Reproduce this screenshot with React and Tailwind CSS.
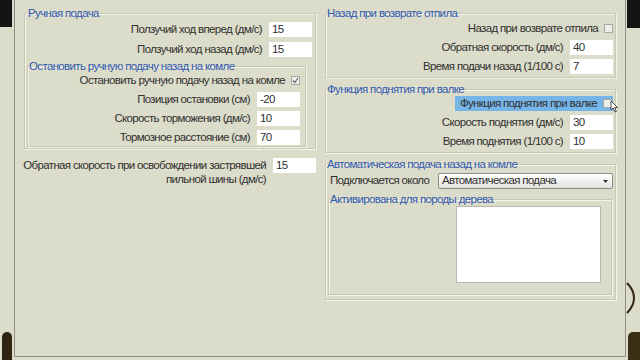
import React from "react";

const font = { fontFamily: '"Liberation Sans", Arial, sans-serif' };

const Check = ({ checked }) => (
  <span className="w-[9px] h-[9px] border border-[#a9a9a2] bg-[#ededea] flex items-center justify-center shrink-0">
    {checked && (
      <svg width="7" height="7" viewBox="0 0 7 7">
        <path d="M1 3.5 L2.8 5.5 L6 1" stroke="#6a6a6a" strokeWidth="1.2" fill="none" />
      </svg>
    )}
  </span>
);

const Field = ({ label, value }) => (
  <div className="flex items-center justify-end h-[15px]">
    <span className="mr-[7px] whitespace-nowrap">{label}</span>
    <div className="w-[43px] h-[15px] bg-white pl-[3px] leading-[15px]">{value}</div>
  </div>
);

const CheckRow = ({ label, checked, active }) => (
  <div className="flex items-center justify-end h-[15px]">
    <span
      className={
        active
          ? "relative flex items-center h-[15px] bg-[#76b5e8] pl-[5px] pr-[1px] whitespace-nowrap"
          : "flex items-center h-[15px] whitespace-nowrap"
      }
    >
      <span className="mr-[6px]">{label}</span>
      <Check checked={checked} />
      {active && (
        <svg className="absolute right-[-6px] top-[4px]" width="9" height="13" viewBox="0 0 9 13">
          <path d="M1 1 L1 10 L3.2 8 L5 12 L6.4 11.4 L4.7 7.6 L7.6 7.6 Z" fill="#fff" stroke="#222" strokeWidth="0.8" />
        </svg>
      )}
    </span>
  </div>
);

const Group = ({ title, className = "", children }) => (
  <fieldset
    className={
      "border border-[#c8c8b7] shadow-[1px_1px_0_#f3f3ea,inset_1px_1px_0_#f3f3ea] " + className
    }
  >
    <legend className="px-[1px] leading-[14px] text-[#3159ad] whitespace-nowrap">{title}</legend>
    {children}
  </fieldset>
);

export default function App() {
  return (
    <div
      className="w-[640px] h-[360px] flex bg-[#dcdcca] text-[11.5px] tracking-[-0.65px] text-[#303030] overflow-hidden"
      style={font}
    >
      {/* left outer strip */}
      <div className="w-[14px] flex flex-col">
        <div className="w-[12px] h-[27px] bg-[#141414]" />
        <div className="flex-1" />
        <div className="ml-[2px] w-[10px] h-[28px] bg-[#2e2410] rounded-t-[5px]" />
      </div>

      {/* dialog */}
      <div className="w-[612px] h-[357px] border-l border-r border-b border-[#8e8e86] flex pl-[9px] pr-[9px]">
        {/* left column */}
        <div className="w-[292px] flex flex-col">
          <Group title="Ручная подача" className="mt-[6px] pl-[2px] pr-[3px] pb-[1px]">
            <div className="mt-[2px] flex flex-col gap-[5px]">
              <Field label="Ползучий ход вперед (дм/с)" value="15" />
              <Field label="Ползучий ход назад (дм/с)" value="15" />
            </div>
            <Group
              title="Остановить ручную подачу назад на комле"
              className="mt-[2px] mr-[6px] pr-[5px] pb-[1px]"
            >
              <div className="flex flex-col gap-[4px]">
                <CheckRow label="Остановить ручную подачу назад на комле" checked />
                <Field label="Позиция остановки (см)" value="-20" />
                <Field label="Скорость торможения (дм/с)" value="10" />
                <Field label="Тормозное расстояние (см)" value="70" />
              </div>
            </Group>
          </Group>

          <div className="mt-[9px] flex items-start justify-end">
            <span className="text-right leading-[14px] mr-[7px] whitespace-nowrap">
              Обратная скорость при освобождении застрявшей
              <br />
              пильной шины (дм/с)
            </span>
            <div className="w-[43px] h-[15px] bg-white pl-[3px] leading-[15px] shrink-0">15</div>
          </div>
        </div>

        {/* right column */}
        <div className="ml-[9px] w-[291px] flex flex-col">
          <Group title="Назад при возврате отпила" className="mt-[6px] pr-[2px] pb-[3px]">
            <div className="mt-[1px] flex flex-col gap-[4px]">
              <CheckRow label="Назад при возврате отпила" />
              <Field label="Обратная скорость (дм/с)" value="40" />
              <Field label="Время подачи назад (1/100 с)" value="7" />
            </div>
          </Group>

          <Group title="Функция поднятия при валке" className="mt-[4px] pr-[2px] pb-[3px]">
            <div className="flex flex-col gap-[4px]">
              <CheckRow label="Функция поднятия при валке" active />
              <Field label="Скорость поднятия (дм/с)" value="30" />
              <Field label="Время поднятия (1/100 с)" value="10" />
            </div>
          </Group>

          <Group title="Автоматическая подача назад на комле" className="mt-[4px] pb-[4px]">
            <div className="mt-[2px] flex items-center h-[16px] pl-[4px] pr-[2px]">
              <span className="w-[108px] whitespace-nowrap">Подключается около</span>
              <div className="flex-1 h-[16px] border border-[#8c8c88] rounded-[2px] bg-gradient-to-b from-[#ffffff] to-[#e2e2de] flex items-center pl-[3px] pr-[4px]">
                <span className="flex-1">Автоматическая подача</span>
                <svg width="5" height="3" viewBox="0 0 5 3">
                  <path d="M0 0 L5 0 L2.5 3 Z" fill="#333" />
                </svg>
              </div>
            </div>
            <Group title="Активирована для породы дерева" className="mt-[3px] ml-[2px] mr-[3px] pb-[11px]">
              <div className="ml-[127px] w-[145px] h-[77px] bg-white border border-[#b8b8b0]" />
            </Group>
          </Group>
        </div>
      </div>

      {/* right outer strip */}
      <div className="w-[14px] flex flex-col">
        <div className="ml-[1px] w-[13px] h-[28px] bg-[#141414]" />
        <div className="flex-1 flex flex-col justify-end">
          <svg width="14" height="32" viewBox="0 0 14 32" className="mb-[18px]">
            <path d="M1 1 Q8 8 8 16 Q8 24 1 31" stroke="#2e2410" strokeWidth="2" fill="none" />
          </svg>
          <div className="ml-[2px] w-[12px] h-[28px] bg-[#3a2f14] rounded-tl-[5px]" />
        </div>
      </div>
    </div>
  );
}
